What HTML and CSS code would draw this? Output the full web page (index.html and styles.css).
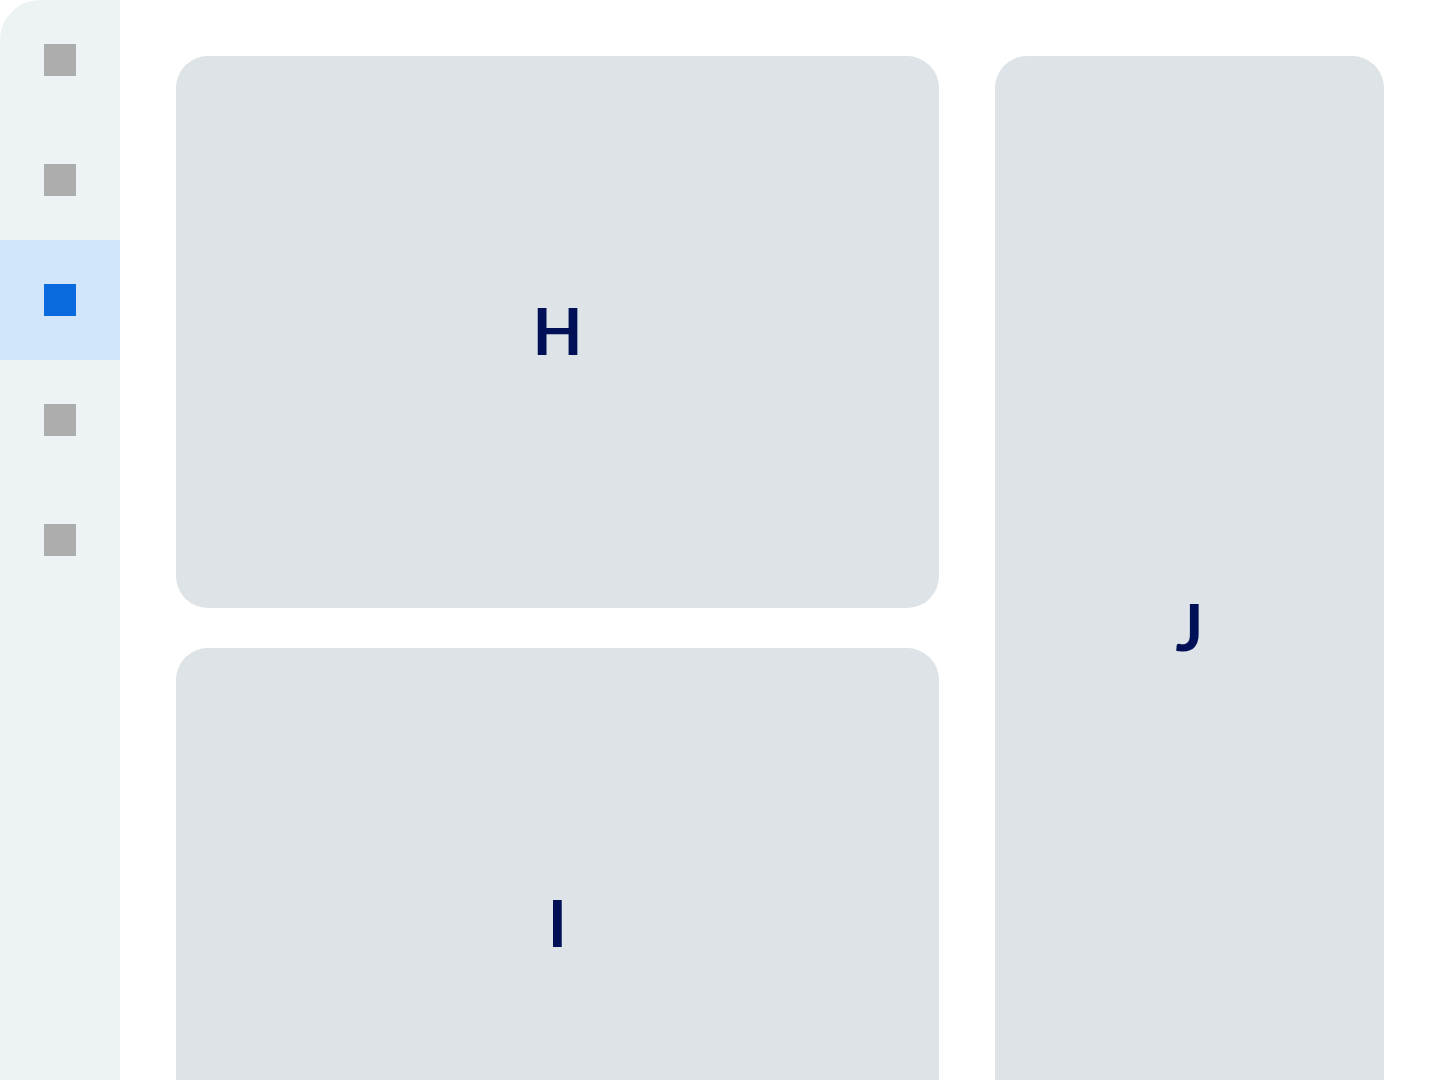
FILE: index.html
```html
<!DOCTYPE html>
<html lang="en">
<head>
  <meta charset="utf-8">
  <meta name="viewport" content="width=device-width, initial-scale=1">
  <title>Layout</title>
  <link rel="stylesheet" href="styles.css">
</head>
<body>
  <div class="shell">
    <nav class="rail" aria-label="Main">
      <a class="rail-item" href="#1" aria-label="Section 1"><span class="rail-icon"></span></a>
      <a class="rail-item" href="#2" aria-label="Section 2"><span class="rail-icon"></span></a>
      <a class="rail-item rail-item-active" href="#3" aria-label="Section 3" aria-current="page"><span class="rail-icon"></span></a>
      <a class="rail-item" href="#4" aria-label="Section 4"><span class="rail-icon"></span></a>
      <a class="rail-item" href="#5" aria-label="Section 5"><span class="rail-icon"></span></a>
    </nav>
    <main class="content">
      <section class="card">H</section>
      <section class="card card-tall">J</section>
      <section class="card">I</section>
    </main>
  </div>
</body>
</html>
```
FILE: styles.css
```css
* {
  box-sizing: border-box;
}

body {
  margin: 0;
  background: #ffffff;
  color: #001056;
  font-family: Lato, sans-serif;
}

.shell {
  display: flex;
  height: 100vh;
  overflow: hidden;
}

.rail {
  flex: 0 0 120px;
  display: flex;
  flex-direction: column;
  background: #edf3f5;
  border-top-left-radius: 40px;
}

.rail-item {
  display: flex;
  align-items: center;
  justify-content: center;
  height: 120px;
}

.rail-item-active {
  background: #d1e6fa;
}

.rail-icon {
  width: 32px;
  height: 32px;
  background: #adadad;
}

.rail-item-active .rail-icon {
  background: #096bde;
}

.content {
  flex: 1;
  display: grid;
  grid-template-columns: 763fr 389fr;
  grid-auto-rows: 552px;
  gap: 40px 56px;
  padding: 56px;
}

.card {
  display: flex;
  align-items: center;
  justify-content: center;
  padding-bottom: 4px;
  background: #dde3e6;
  border-radius: 32px;
  font-size: 65px;
  font-weight: 700;
  line-height: 80px;
}

.card-tall {
  grid-row: span 2;
}
```
